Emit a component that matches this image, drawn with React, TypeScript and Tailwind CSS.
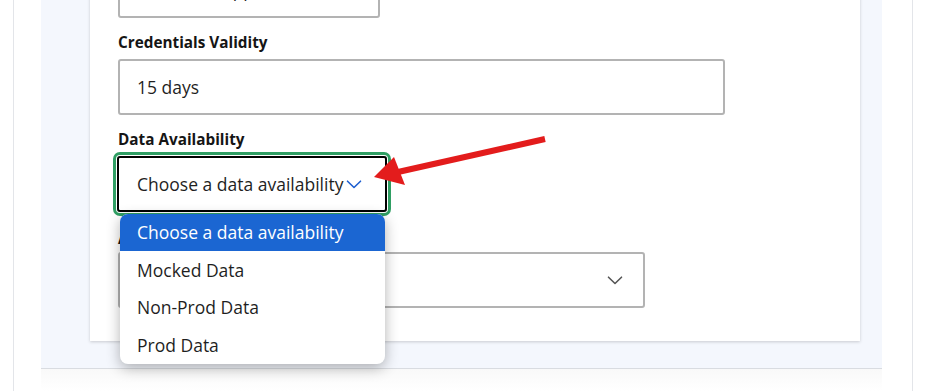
import React from "react";

const Chevron = ({ color, w = 16 }: { color: string; w?: number }) => (
  <svg width={w} height={9} viewBox="0 0 16 9" fill="none">
    <path d="M1.5 1.2 L8 7.5 L14.5 1.2" stroke={color} strokeWidth="1.6" strokeLinecap="round" strokeLinejoin="round" />
  </svg>
);

export default function App() {
  const items = ["Choose a data availability", "Mocked Data", "Non-Prod Data", "Prod Data"];
  return (
    <div className="relative w-[926px] h-[391px] overflow-hidden bg-white flex font-['Open_Sans',sans-serif] text-[#1f1f1f]">
      <div className="w-[13px] shrink-0" />
      <div className="w-px shrink-0 bg-[#e3e5e9]" />
      <div className="w-[27px] shrink-0" />
      <div className="w-[841px] shrink-0 flex flex-col">
        <div className="h-[369px] shrink-0 bg-[#f4f7fd] border-b border-[#d9dce1] flex flex-col justify-end pb-[27px] pl-[49px]">
          <div className="w-[770px] shrink-0 bg-white shadow-[0_1px_3px_rgba(0,0,0,0.18)] px-[28px] pt-[20px] pb-[33px]">
            <div className="w-[262px] h-[55px] border-2 border-[#b3b3b3] rounded-[3px] flex items-center pl-[17px] text-[17.5px]">
              Customer App
            </div>
            <div className="mt-[14px] mb-[7px] text-[15.3px] leading-[20px] font-bold text-[#151515]">Credentials Validity</div>
            <div className="w-[607px] h-[56px] border-2 border-[#b3b3b3] rounded-[3px] flex items-center pl-[17px] text-[17.5px]">
              15 days
            </div>
            <div className="mt-[14px] mb-[7px] text-[15.3px] leading-[20px] font-bold text-[#151515]">Data Availability</div>
            <div className="relative w-[270px] -ml-px">
              <div className="h-[56px] border-2 border-black rounded-[3px] ring-[3px] ring-[#2f9e63] ring-offset-1 flex items-center gap-[3px] pl-[18px] text-[17.5px] whitespace-nowrap">
                <span>Choose a data availability</span>
                <Chevron color="#1e5fd0" />
              </div>
              <div className="absolute z-10 top-[58px] left-[3px] w-[265px] bg-white rounded-lg overflow-hidden shadow-[0_4px_14px_rgba(0,0,0,0.3)]">
                {items.map((t, i) => (
                  <div
                    key={t}
                    className={
                      i === 0
                        ? "h-[37px] flex items-center pl-[17px] text-[17.5px] bg-[#1b66d2] text-white"
                        : "h-[37.5px] flex items-center pl-[17px] text-[17.5px] text-[#1f1f1f]"
                    }
                  >
                    {t}
                  </div>
                ))}
              </div>
            </div>
            <div className="mt-[16px] mb-[4px] text-[15.3px] leading-[20px] font-bold text-[#151515]">Authentication Type</div>
            <div className="w-[527px] h-[56px] border-2 border-[#b3b3b3] rounded-[3px] flex items-center justify-end pr-[20px]">
              <Chevron color="#555555" />
            </div>
          </div>
        </div>
        <div className="flex-1 bg-gradient-to-b from-[#f9f9f9] to-white" />
      </div>
      <div className="w-[30px] shrink-0" />
      <div className="w-px shrink-0 bg-[#e3e5e9]" />
      <div className="flex-1" />
      <svg className="absolute left-0 top-0 pointer-events-none" width="926" height="391" viewBox="0 0 926 391">
        <line x1="545" y1="139" x2="398" y2="172" stroke="#e31c1c" strokeWidth="6" strokeLinecap="butt" />
        <polygon points="374,177 394,157 405,185" fill="#e31c1c" />
      </svg>
    </div>
  );
}
